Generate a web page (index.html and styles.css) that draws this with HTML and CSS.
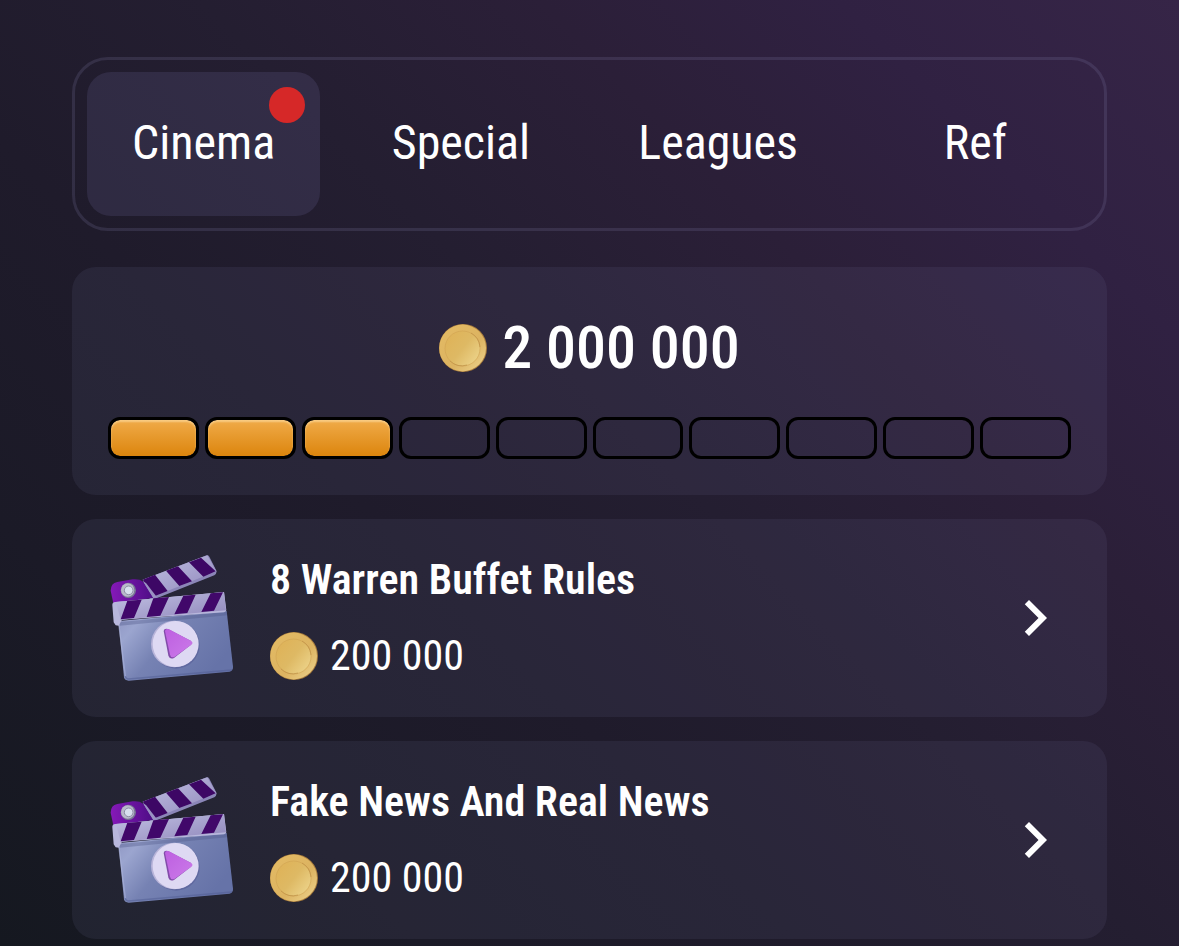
FILE: index.html
```html
<!DOCTYPE html>
<html lang="en">
<head>
<meta charset="utf-8">
<meta name="viewport" content="width=device-width, initial-scale=1">
<title>Cinema</title>
<link rel="stylesheet" href="styles.css">
</head>
<body>
<svg class="sprite" aria-hidden="true">
  <defs>
    <linearGradient id="coin-rim" x1="0" y1="0" x2="1" y2="1"><stop offset="0" stop-color="#e4bb64"/><stop offset=".6" stop-color="#dcb361"/><stop offset="1" stop-color="#efd691"/></linearGradient>
    <linearGradient id="coin-face" x1="0" y1=".1" x2="1" y2=".9"><stop offset="0" stop-color="#dfb257"/><stop offset=".5" stop-color="#deb964"/><stop offset="1" stop-color="#eed68e"/></linearGradient>
    <linearGradient id="body" x1="0" y1="0" x2="1" y2=".5"><stop offset="0" stop-color="#8f95c2"/><stop offset=".2" stop-color="#9ba5cf"/><stop offset=".5" stop-color="#7682b3"/><stop offset="1" stop-color="#6673a8"/></linearGradient>
    <linearGradient id="light" x1="0" y1="0" x2="1" y2="1"><stop offset="0" stop-color="#c2c2e4"/><stop offset="1" stop-color="#8f86ba"/></linearGradient>
    <linearGradient id="hinge" x1="0" y1="0" x2="1" y2="0"><stop offset="0" stop-color="#8519b8"/><stop offset="1" stop-color="#4e0d86"/></linearGradient>
    <linearGradient id="play" x1="0" y1="0" x2="1" y2="1"><stop offset="0" stop-color="#bd5fe0"/><stop offset="1" stop-color="#cb7be9"/></linearGradient>
    <symbol id="coin" viewBox="0 0 48 48">
      <circle cx="24" cy="24" r="24" fill="#a77b3c"/>
      <circle cx="23.6" cy="24" r="23.4" fill="url(#coin-rim)"/>
      <circle cx="23.5" cy="24.5" r="17.5" fill="url(#coin-face)" stroke="#d0a353" stroke-width=".6"/>
      <path d="M11 37a17.5 17.5 0 0 0 17 4M32 9a17.5 17.5 0 0 1 9 14" fill="none" stroke="#bf9147" stroke-width=".7"/>
    </symbol>
    <symbol id="clapper" viewBox="54 45 378 378">
      <path d="M158 119 346 47Q354 43 358 50L380 94Q379 103 373 106L200 175 180 178Z" fill="#8b86b8"/>
      <path d="M158 119 352 46 379 94 195 168Z" fill="url(#light)"/>
      <path d="M158 119 195 104 233 153 195 168ZM228 92 264 79 306 124 268 138ZM297 67 333 53 377 94 340 110Z" fill="#3d0765"/>
      <path d="M62 152Q62 130 82 126L128 118Q148 116 160 125L190 174 70 190Z" fill="url(#hinge)"/>
      <path d="M160 125 190 174 201 172 168 129Z" fill="#9a91c3"/>
      <circle cx="115" cy="151" r="23" fill="#777894"/>
      <circle cx="113" cy="150" r="20" fill="#b9b9cb"/>
      <circle cx="116" cy="151" r="13" fill="#d8e0ef" stroke="#8c8da5" stroke-width="3"/>
      <path d="M85 243 410 213 429 380Q430 391 419 395L116 422Q104 422 102 412Z" fill="url(#body)"/>
      <path d="M106 409Q108 417 116 417L426 390" fill="none" stroke="#4f5b91" stroke-width="4" opacity=".5"/>
      <path d="M86 250 106 408" fill="none" stroke="#b1b9df" stroke-width="4" opacity=".5"/>
      <path d="M84 247 410 216 412 226 90 257Z" fill="#4e5687" opacity=".35"/>
      <path d="M67 196Q66 187 76 186L402 156 409 211Q408 216 402 217L96 239 86 257 77 256 71 247Z" fill="#b8b7dc"/>
      <path d="M78 186 402 156 408 211 92 239Z" fill="url(#light)"/>
      <path d="M112 182 155 179 132 234 92 238ZM190 175 237 171 211 227 170 231ZM280 167 317 164 292 219 253 223ZM362 160 399 157 372 212 334 216Z" fill="#41086a"/>
      <circle cx="258" cy="315" r="71" fill="#6069a0"/>
      <circle cx="253" cy="312" r="70" fill="#b8b4d9"/>
      <circle cx="257" cy="312" r="69" fill="#ded9f3"/>
      <path d="M221 273Q222 264 234 267L299 301Q310 308 302 315L252 354Q239 360 235 346Z" fill="#824ba9"/>
      <path d="M225 273Q227 264 237 268L302 302Q312 308 304 314L253 351Q243 355 240 344Z" fill="url(#play)"/>
    </symbol>
    <symbol id="chevron" viewBox="0 0 24 24"><path d="M10 6 8.590 7.410 13.170 12l-4.580 4.590L10 18l6-6z" fill="#fff"/></symbol>
  </defs>
</svg>
<main class="page">
  <nav class="tabs" aria-label="Sections">
    <button class="tab tab-active" type="button" aria-current="page">Cinema<span class="badge"></span></button>
    <button class="tab" type="button">Special</button>
    <button class="tab" type="button">Leagues</button>
    <button class="tab" type="button">Ref</button>
  </nav>
  <section class="card summary" aria-label="Progress">
    <div class="total"><svg class="coin" aria-hidden="true"><use href="#coin"/></svg><span>2 000 000</span></div>
    <div class="progress" role="progressbar" aria-label="Tasks completed" aria-valuemin="0" aria-valuemax="10" aria-valuenow="3">
      <span class="step step-done"></span><span class="step step-done"></span><span class="step step-done"></span><span class="step"></span><span class="step"></span><span class="step"></span><span class="step"></span><span class="step"></span><span class="step"></span><span class="step"></span>
    </div>
  </section>
  <div class="list">
    <a class="card item" href="#warren">
      <svg class="clapper" aria-hidden="true"><use href="#clapper"/></svg>
      <span class="info">
        <span class="title">8 Warren Buffet Rules</span>
        <span class="reward"><svg class="coin" aria-hidden="true"><use href="#coin"/></svg><span>200 000</span></span>
      </span>
      <svg class="chevron" aria-hidden="true"><use href="#chevron"/></svg>
    </a>
    <a class="card item" href="#news">
      <svg class="clapper" aria-hidden="true"><use href="#clapper"/></svg>
      <span class="info">
        <span class="title">Fake News And Real News</span>
        <span class="reward"><svg class="coin" aria-hidden="true"><use href="#coin"/></svg><span>200 000</span></span>
      </span>
      <svg class="chevron" aria-hidden="true"><use href="#chevron"/></svg>
    </a>
  </div>
</main>
</body>
</html>
```
FILE: styles.css
```css
* {
  box-sizing: border-box;
}

body {
  margin: 0;
  min-height: 100vh;
  background: linear-gradient(225deg, #362547 0%, #302142 16%, #2b1f38 30%, #241e31 46%, #1f1b2b 62%, #1b1a27 80%, #151820 100%);
  color: #fff;
  font-family: "Roboto Condensed", Roboto, sans-serif;
}

.sprite {
  position: absolute;
  width: 0;
  height: 0;
}

.page {
  padding: 57px 72px 0;
}

.tabs {
  display: grid;
  grid-template-columns: repeat(4, 1fr);
  gap: 24px;
  padding: 12px;
  border: 3px solid rgba(130, 125, 170, 0.2);
  border-radius: 36px;
}

.tab {
  position: relative;
  height: 144px;
  padding: 0 0 2px;
  border: 0;
  border-radius: 24px;
  background: transparent;
  color: inherit;
  font-family: inherit;
  font-size: 48px;
  line-height: 56px;
}

.tab-active {
  background: rgba(130, 125, 185, 0.16);
}

.badge {
  position: absolute;
  top: 15px;
  right: 15px;
  width: 36px;
  height: 36px;
  border-radius: 50%;
  background: #d62828;
}

.card {
  padding: 36px;
  border-radius: 24px;
  background: rgba(130, 130, 175, 0.11);
}

.summary {
  display: flex;
  flex-direction: column;
  gap: 24px;
  margin-top: 36px;
}

.total {
  display: flex;
  align-items: center;
  justify-content: center;
  gap: 15px;
  font-size: 60px;
  font-weight: 500;
  line-height: 90px;
}

.coin {
  flex: none;
  width: 48px;
  height: 48px;
}

.progress {
  display: flex;
  gap: 6px;
}

.step {
  flex: 1;
  height: 42px;
  border: 3px solid #000;
  border-radius: 12px;
}

.step-done {
  background: linear-gradient(#f0ab49, #dc850d) padding-box;
  box-shadow: inset 0 2px 2px rgba(255, 225, 170, 0.6);
}

.list {
  display: flex;
  flex-direction: column;
  gap: 24px;
  padding-top: 24px;
}

.item {
  display: flex;
  align-items: center;
  gap: 36px;
  color: inherit;
  text-decoration: none;
}

.clapper {
  flex: none;
  width: 126px;
  height: 126px;
}

.info {
  display: flex;
  flex: 1;
  flex-direction: column;
  gap: 28px;
  font-size: 42px;
  line-height: 48px;
}

.title {
  font-weight: 600;
}

.reward {
  display: flex;
  align-items: center;
  gap: 12px;
  line-height: 46px;
}

.chevron {
  flex: none;
  width: 72px;
  height: 72px;
}
```
